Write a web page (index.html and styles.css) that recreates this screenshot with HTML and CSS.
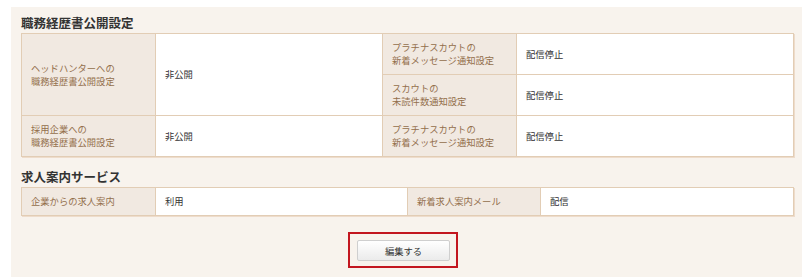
FILE: index.html
```html
<!DOCTYPE html>
<html lang="ja">
<head>
    <meta charset="UTF-8">
    <title>職務経歴書公開設定</title>
    <link rel="stylesheet" href="styles.css">
</head>
<body>
    <div class="panel">
        <h2>職務経歴書公開設定</h2>
        <table class="setting resume">
            <colgroup>
                <col class="c1"><col class="c2"><col class="c3"><col class="c4">
            </colgroup>
            <tr>
                <th rowspan="2">ヘッドハンターへの<br>職務経歴書公開設定</th>
                <td rowspan="2">非公開</td>
                <th>プラチナスカウトの<br>新着メッセージ通知設定</th>
                <td>配信停止</td>
            </tr>
            <tr>
                <th>スカウトの<br>未読件数通知設定</th>
                <td>配信停止</td>
            </tr>
            <tr>
                <th>採用企業への<br>職務経歴書公開設定</th>
                <td>非公開</td>
                <th>プラチナスカウトの<br>新着メッセージ通知設定</th>
                <td>配信停止</td>
            </tr>
        </table>

        <h2>求人案内サービス</h2>
        <table class="setting jobs">
            <colgroup>
                <col class="c1"><col class="c2"><col class="c3"><col class="c4">
            </colgroup>
            <tr>
                <th>企業からの求人案内</th>
                <td>利用</td>
                <th>新着求人案内メール</th>
                <td>配信</td>
            </tr>
        </table>

        <div class="actions">
            <div class="highlight">
                <button type="button">編集する</button>
            </div>
        </div>
    </div>
</body>
</html>
```

FILE: styles.css
```css
body {
    margin: 0;
    background: #fff;
    font-family: "Noto Sans CJK JP", "Noto Sans", sans-serif;
    color: #333;
}
.panel {
    margin: 7px 7px 0 11px;
    padding: 7px 9px 8px 10px;
    background-color: #f8f3ed;
    height: 270px;
    box-sizing: border-box;
}
h2 {
    font-size: 12.5px;
    font-weight: bold;
    margin: 0 0 2px 0;
    line-height: 17px;
    color: #333;
}
.setting {
    border-collapse: collapse;
    width: 772px;
    table-layout: fixed;
    border: 1px solid #e2cdb5;
    box-shadow: 1px 1px 0 #eedccb;
}
.setting th,
.setting td {
    border: 1px solid #e2cdb5;
    font-size: 9.3px;
    line-height: 13px;
    text-align: left;
    padding: 0 9px;
    font-weight: normal;
}
.setting th {
    background-color: #f1e9e1;
    color: #936f4c;
}
.setting td {
    background-color: #fff;
    color: #333;
}
.resume { margin-bottom: 11px; }
.resume tr { height: 41px; }
.resume .c1 { width: 134px; }
.resume .c2 { width: 227px; }
.resume .c3 { width: 134px; }
.resume .c4 { width: 277px; }

.jobs tr { height: 28px; }
.jobs .c1 { width: 134px; }
.jobs .c2 { width: 252px; }
.jobs .c3 { width: 133px; }
.jobs .c4 { width: 253px; }

.actions {
    display: flex;
    justify-content: center;
    margin-top: 16px;
    padding-right: 8px;
}
.highlight {
    border: 2px solid #c3161f;
    padding: 6px 6px 5px 7px;
    background: #f8f3ed;
}
button {
    display: block;
    width: 93px;
    height: 21px;
    font-family: inherit;
    font-size: 9.3px;
    color: #333;
    border: 1px solid #cfcfcf;
    border-radius: 2px;
    background: linear-gradient(#ffffff, #ebebeb);
    padding: 0;
    cursor: pointer;
}
```
